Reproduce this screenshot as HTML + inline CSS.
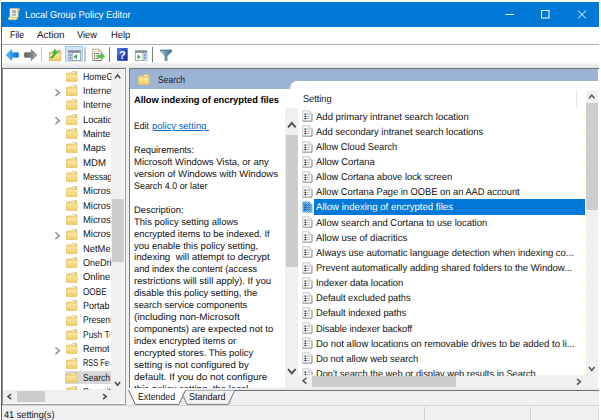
<!DOCTYPE html><html><head><meta charset="utf-8"><title>Local Group Policy Editor</title><style>

html,body{margin:0;padding:0;}
body{width:601px;height:420px;position:relative;overflow:hidden;background:#fff;font-family:"Liberation Sans", sans-serif;}
#w div,#w span,#w svg{position:absolute;}
#w{position:absolute;left:0;top:0;width:601px;height:420px;overflow:hidden;}
.t{text-rendering:geometricPrecision;white-space:pre;line-height:12px;height:12px;display:block;transform-origin:0 0;}

</style></head><body><div id="w">
<div style="left:1px;top:2px;width:598px;height:24.7px;background:#0078d7;"></div>
<div style="left:1px;top:26px;width:1px;height:394px;background:#0078d7;"></div>
<div style="left:2px;top:26.7px;width:597px;height:17.3px;background:#fff;"></div>
<div style="left:2px;top:44px;width:597px;height:0.9px;background:#adadad;"></div>
<div style="left:2px;top:45px;width:597px;height:18px;background:#fff;"></div>
<div style="left:2px;top:63px;width:597px;height:357px;background:#f0f0f0;"></div>
<svg style="left:500px;top:4px" width="96" height="20" viewBox="0 0 96 20"><g stroke="#fff" stroke-width="1" fill="none"><path d="M5.5 10.5h8.5"/><rect x="41.5" y="6.5" width="7.5" height="7.5"/><path d="M78 6.5l8 8M86 6.5l-8 8"/></g></svg>
<svg style="left:6px;top:6px" width="16" height="16" viewBox="6 6 16 16">
<path d="M10.2 8.4h8v9.2h-8z" fill="#fbf4d2"/>
<path d="M10.2 8.4v9.2" stroke="#fffdf0" stroke-width=".8"/>
<path d="M10.4 8.4h7.4" stroke="#e6cf8c" stroke-width=".6"/>
<path d="M17.6 8.5c1.6-.5 2.6.3 2.4 1.5-.1.9-1 1.2-2.2 1z" fill="#dcb862" stroke="#c9a24c" stroke-width=".4"/>
<path d="M18.1 11v6.3" stroke="#e2c77e" stroke-width=".7"/>
<rect x="8.2" y="17.2" width="9" height="2.6" rx="1.3" fill="#fbf1c4" stroke="#d9b663" stroke-width=".6"/>
<path d="M16.3 17.4c1 .1 1.4.6 1.4 1.2s-.5 1.1-1.4 1.1z" fill="#dcb862"/>
<rect x="12" y="10.1" width="4.1" height="2.9" fill="#aaa8b8"/>
<rect x="12" y="13.7" width="4.1" height="2" fill="#aaa8b8"/>
<path d="M12 11.5h4.1M12 14.7h4.1" stroke="#c9c7d2" stroke-width=".5"/>
</svg>
<div style="left:65px;top:45.6px;width:18px;height:17px;background:#cfe5f9;box-sizing:border-box;border:1px solid #a3ccf1;"></div>
<div style="left:41.2px;top:47.2px;width:1.3px;height:14.4px;background:#c6c6c6;"></div>
<div style="left:84.4px;top:47.2px;width:1.3px;height:14.4px;background:#c6c6c6;"></div>
<div style="left:109px;top:47.2px;width:1px;height:14.4px;background:#7a7a7a;"></div>
<div style="left:152px;top:47.2px;width:1px;height:14.4px;background:#7a7a7a;"></div>
<svg style="left:0;top:44px" width="180" height="20" viewBox="0 44 180 20">
<defs>
<linearGradient id="gb" x1="0" y1="0" x2="1" y2="0"><stop offset="0" stop-color="#62bffa"/><stop offset=".45" stop-color="#2e9cef"/><stop offset="1" stop-color="#0a6bd0"/></linearGradient>
<linearGradient id="gg" x1="0" y1="0" x2="1" y2="0"><stop offset="0" stop-color="#626262"/><stop offset=".55" stop-color="#7e7e7e"/><stop offset="1" stop-color="#b0b0b0"/></linearGradient>
<linearGradient id="gfo" x1="0" y1="0" x2="0" y2="1"><stop offset="0" stop-color="#fdeeb0"/><stop offset="1" stop-color="#efcb66"/></linearGradient>
<linearGradient id="gh" x1="0" y1="0" x2="1" y2="1"><stop offset="0" stop-color="#5c80ea"/><stop offset=".5" stop-color="#2f4cc6"/><stop offset="1" stop-color="#152594"/></linearGradient>
<linearGradient id="gf" x1="0" y1="0" x2="1" y2="0"><stop offset="0" stop-color="#b1cadc"/><stop offset=".45" stop-color="#6f96b5"/><stop offset="1" stop-color="#416b8b"/></linearGradient>
</defs>
<path d="M6 55L11.8 49.3V52.5H17.6Q18.7 52.5 18.7 53.6V56.3Q18.7 57.4 17.6 57.4H11.8V60.7Z" fill="url(#gb)" stroke="#3f9fea" stroke-width=".5" stroke-linejoin="round"/>
<path d="M37 55L31.2 49.4V52.5H25.4Q24.3 52.5 24.3 53.6V56.3Q24.3 57.4 25.4 57.4H31.2V60.6Z" fill="url(#gg)" stroke="#6a6a6a" stroke-width=".5" stroke-linejoin="round"/>
<path d="M49.5 52.2h6.2l1-1.7h4.1v10.2H49.5z" fill="#f1d174" stroke="#cfa94a" stroke-width=".6"/>
<rect x="49.5" y="53.2" width="11.3" height="7.5" fill="url(#gfo)" stroke="#d3ae52" stroke-width=".5"/>
<rect x="58" y="51" width="1.5" height="1" fill="#4a8fe0"/>
<path d="M52 53L55 49 57.7 53.5 56 53C55.4 55.5 54 57.3 51.5 58.4L50.5 57C52.6 56 53.6 54.6 53.9 52.7Z" fill="#3cc33c" stroke="#27a027" stroke-width=".4"/>
<rect x="68.3" y="50.7" width="12.4" height="9.8" fill="#fff" stroke="#7f868f" stroke-width=".7"/>
<rect x="68.3" y="50.7" width="12.4" height="2.2" fill="#8a9099"/>
<rect x="68.7" y="53.1" width="3.9" height="7.1" fill="#ccd5e4"/>
<path d="M72.9 53v7.4" stroke="#8a9099" stroke-width=".6"/>
<rect x="69.7" y="54.4" width="1.6" height="1.3" fill="#2f6fd0"/><rect x="69.7" y="57.2" width="1.6" height="1.3" fill="#2f6fd0"/>
<path d="M77 54.1v5.4l-3.5-2.7z" fill="#3cb44a"/>
<path d="M92.3 49.1h6.8l2.7 2.7v8.7H92.3z" fill="#f8f1d8" stroke="#98988e" stroke-width=".7"/>
<path d="M92.3 60.5h9.5" stroke="#6e6e68" stroke-width=".7"/>
<path d="M99.1 49.1v2.7h2.7" fill="#e6dfc4" stroke="#98988e" stroke-width=".5"/>
<path d="M94 53.5h1M94 56h1M94 58.5h1" stroke="#2e2e2e" stroke-width="1"/>
<path d="M95.7 53.5h3.4M95.7 56h2.4M95.7 58.5h2.4" stroke="#6d6fa8" stroke-width=".9"/>
<path d="M98 54.9h3.3V53.1l3.6 3.2-3.6 3.2V57.7H98z" fill="#4ccb3f" stroke="#2f9e2a" stroke-width=".4"/>
<rect x="117" y="48" width="10.7" height="12.8" fill="url(#gh)"/>
<text x="122.4" y="58.7" font-family="Liberation Sans, sans-serif" font-weight="bold" font-size="11" fill="#fff" text-anchor="middle">?</text>
<rect x="135.3" y="50.7" width="11.6" height="9.8" fill="#fff" stroke="#7f868f" stroke-width=".7"/>
<rect x="135.3" y="50.7" width="11.6" height="2.2" fill="#8a9099"/>
<rect x="143.1" y="53.1" width="3.5" height="7.1" fill="#ccd5e4"/>
<path d="M142.9 53v7.4" stroke="#8a9099" stroke-width=".6"/>
<rect x="144.1" y="54.4" width="1.5" height="1.3" fill="#2f6fd0"/><rect x="144.1" y="57.2" width="1.5" height="1.3" fill="#2f6fd0"/>
<path d="M137.5 54.2v5.4l3.4-2.7z" fill="#3cb44a"/>
<path d="M160 49.8h12v1.7l-4.5 4.4v5.2h-3v-5.2L160 51.5z" fill="url(#gf)"/>
<rect x="160" y="49.8" width="12" height="1.1" fill="#54798f"/>
</svg>
<div style="left:2px;top:62px;width:597px;height:6px;background:linear-gradient(#fcfcfc,#efefef 40%,#e4e4e4);"></div>
<div style="left:2px;top:68px;width:124px;height:337px;background:#fff;box-sizing:border-box;border:1px solid #949ca4;border-top-color:#6c747c;border-left-color:#868e96;"></div>
<div style="left:3px;top:69px;width:108.2px;height:321.3px;overflow:hidden">
<svg style="left:62.8px;top:1.8px" width="12" height="11" viewBox="0 0 12 11"><path d="M.6 2.6q0-.6.6-.6h4.2l1-1.4h4q.5 0 .5.5v9.2H.6z" fill="#f3d47a" stroke="#dfbd62" stroke-width=".6"/><rect x=".6" y="3.2" width="10.3" height="7.1" fill="url(#gfo)" stroke="#e3c268" stroke-width=".5"/><path d="M6.9 1.1h3.6v1H6.2z" fill="#fff" opacity=".9"/><rect x="8.8" y="1.1" width="1.5" height=".9" fill="#74abe9"/></svg>
<svg style="left:62.8px;top:16.14px" width="12" height="11" viewBox="0 0 12 11"><path d="M.6 2.6q0-.6.6-.6h4.2l1-1.4h4q.5 0 .5.5v9.2H.6z" fill="#f3d47a" stroke="#dfbd62" stroke-width=".6"/><rect x=".6" y="3.2" width="10.3" height="7.1" fill="url(#gfo)" stroke="#e3c268" stroke-width=".5"/><path d="M6.9 1.1h3.6v1H6.2z" fill="#fff" opacity=".9"/><rect x="8.8" y="1.1" width="1.5" height=".9" fill="#74abe9"/></svg>
<svg style="left:51.00px;top:18.69px" width="7" height="9.3" viewBox="0 0 7 9.3"><path d="M1.4 1.2L5.4 4.65 1.4 8.1" fill="none" stroke="#909090" stroke-width="1.4"/></svg>
<svg style="left:62.8px;top:30.48px" width="12" height="11" viewBox="0 0 12 11"><path d="M.6 2.6q0-.6.6-.6h4.2l1-1.4h4q.5 0 .5.5v9.2H.6z" fill="#f3d47a" stroke="#dfbd62" stroke-width=".6"/><rect x=".6" y="3.2" width="10.3" height="7.1" fill="url(#gfo)" stroke="#e3c268" stroke-width=".5"/><path d="M6.9 1.1h3.6v1H6.2z" fill="#fff" opacity=".9"/><rect x="8.8" y="1.1" width="1.5" height=".9" fill="#74abe9"/></svg>
<svg style="left:62.8px;top:44.81px" width="12" height="11" viewBox="0 0 12 11"><path d="M.6 2.6q0-.6.6-.6h4.2l1-1.4h4q.5 0 .5.5v9.2H.6z" fill="#f3d47a" stroke="#dfbd62" stroke-width=".6"/><rect x=".6" y="3.2" width="10.3" height="7.1" fill="url(#gfo)" stroke="#e3c268" stroke-width=".5"/><path d="M6.9 1.1h3.6v1H6.2z" fill="#fff" opacity=".9"/><rect x="8.8" y="1.1" width="1.5" height=".9" fill="#74abe9"/></svg>
<svg style="left:51.00px;top:47.36px" width="7" height="9.3" viewBox="0 0 7 9.3"><path d="M1.4 1.2L5.4 4.65 1.4 8.1" fill="none" stroke="#909090" stroke-width="1.4"/></svg>
<svg style="left:62.8px;top:59.15px" width="12" height="11" viewBox="0 0 12 11"><path d="M.6 2.6q0-.6.6-.6h4.2l1-1.4h4q.5 0 .5.5v9.2H.6z" fill="#f3d47a" stroke="#dfbd62" stroke-width=".6"/><rect x=".6" y="3.2" width="10.3" height="7.1" fill="url(#gfo)" stroke="#e3c268" stroke-width=".5"/><path d="M6.9 1.1h3.6v1H6.2z" fill="#fff" opacity=".9"/><rect x="8.8" y="1.1" width="1.5" height=".9" fill="#74abe9"/></svg>
<svg style="left:62.8px;top:73.49px" width="12" height="11" viewBox="0 0 12 11"><path d="M.6 2.6q0-.6.6-.6h4.2l1-1.4h4q.5 0 .5.5v9.2H.6z" fill="#f3d47a" stroke="#dfbd62" stroke-width=".6"/><rect x=".6" y="3.2" width="10.3" height="7.1" fill="url(#gfo)" stroke="#e3c268" stroke-width=".5"/><path d="M6.9 1.1h3.6v1H6.2z" fill="#fff" opacity=".9"/><rect x="8.8" y="1.1" width="1.5" height=".9" fill="#74abe9"/></svg>
<svg style="left:62.8px;top:87.83px" width="12" height="11" viewBox="0 0 12 11"><path d="M.6 2.6q0-.6.6-.6h4.2l1-1.4h4q.5 0 .5.5v9.2H.6z" fill="#f3d47a" stroke="#dfbd62" stroke-width=".6"/><rect x=".6" y="3.2" width="10.3" height="7.1" fill="url(#gfo)" stroke="#e3c268" stroke-width=".5"/><path d="M6.9 1.1h3.6v1H6.2z" fill="#fff" opacity=".9"/><rect x="8.8" y="1.1" width="1.5" height=".9" fill="#74abe9"/></svg>
<svg style="left:62.8px;top:102.17px" width="12" height="11" viewBox="0 0 12 11"><path d="M.6 2.6q0-.6.6-.6h4.2l1-1.4h4q.5 0 .5.5v9.2H.6z" fill="#f3d47a" stroke="#dfbd62" stroke-width=".6"/><rect x=".6" y="3.2" width="10.3" height="7.1" fill="url(#gfo)" stroke="#e3c268" stroke-width=".5"/><path d="M6.9 1.1h3.6v1H6.2z" fill="#fff" opacity=".9"/><rect x="8.8" y="1.1" width="1.5" height=".9" fill="#74abe9"/></svg>
<svg style="left:62.8px;top:116.5px" width="12" height="11" viewBox="0 0 12 11"><path d="M.6 2.6q0-.6.6-.6h4.2l1-1.4h4q.5 0 .5.5v9.2H.6z" fill="#f3d47a" stroke="#dfbd62" stroke-width=".6"/><rect x=".6" y="3.2" width="10.3" height="7.1" fill="url(#gfo)" stroke="#e3c268" stroke-width=".5"/><path d="M6.9 1.1h3.6v1H6.2z" fill="#fff" opacity=".9"/><rect x="8.8" y="1.1" width="1.5" height=".9" fill="#74abe9"/></svg>
<svg style="left:62.8px;top:130.84px" width="12" height="11" viewBox="0 0 12 11"><path d="M.6 2.6q0-.6.6-.6h4.2l1-1.4h4q.5 0 .5.5v9.2H.6z" fill="#f3d47a" stroke="#dfbd62" stroke-width=".6"/><rect x=".6" y="3.2" width="10.3" height="7.1" fill="url(#gfo)" stroke="#e3c268" stroke-width=".5"/><path d="M6.9 1.1h3.6v1H6.2z" fill="#fff" opacity=".9"/><rect x="8.8" y="1.1" width="1.5" height=".9" fill="#74abe9"/></svg>
<svg style="left:62.8px;top:145.18px" width="12" height="11" viewBox="0 0 12 11"><path d="M.6 2.6q0-.6.6-.6h4.2l1-1.4h4q.5 0 .5.5v9.2H.6z" fill="#f3d47a" stroke="#dfbd62" stroke-width=".6"/><rect x=".6" y="3.2" width="10.3" height="7.1" fill="url(#gfo)" stroke="#e3c268" stroke-width=".5"/><path d="M6.9 1.1h3.6v1H6.2z" fill="#fff" opacity=".9"/><rect x="8.8" y="1.1" width="1.5" height=".9" fill="#74abe9"/></svg>
<svg style="left:62.8px;top:159.52px" width="12" height="11" viewBox="0 0 12 11"><path d="M.6 2.6q0-.6.6-.6h4.2l1-1.4h4q.5 0 .5.5v9.2H.6z" fill="#f3d47a" stroke="#dfbd62" stroke-width=".6"/><rect x=".6" y="3.2" width="10.3" height="7.1" fill="url(#gfo)" stroke="#e3c268" stroke-width=".5"/><path d="M6.9 1.1h3.6v1H6.2z" fill="#fff" opacity=".9"/><rect x="8.8" y="1.1" width="1.5" height=".9" fill="#74abe9"/></svg>
<svg style="left:51.00px;top:162.07px" width="7" height="9.3" viewBox="0 0 7 9.3"><path d="M1.4 1.2L5.4 4.65 1.4 8.1" fill="none" stroke="#909090" stroke-width="1.4"/></svg>
<svg style="left:62.8px;top:173.86px" width="12" height="11" viewBox="0 0 12 11"><path d="M.6 2.6q0-.6.6-.6h4.2l1-1.4h4q.5 0 .5.5v9.2H.6z" fill="#f3d47a" stroke="#dfbd62" stroke-width=".6"/><rect x=".6" y="3.2" width="10.3" height="7.1" fill="url(#gfo)" stroke="#e3c268" stroke-width=".5"/><path d="M6.9 1.1h3.6v1H6.2z" fill="#fff" opacity=".9"/><rect x="8.8" y="1.1" width="1.5" height=".9" fill="#74abe9"/></svg>
<svg style="left:62.8px;top:188.19px" width="12" height="11" viewBox="0 0 12 11"><path d="M.6 2.6q0-.6.6-.6h4.2l1-1.4h4q.5 0 .5.5v9.2H.6z" fill="#f3d47a" stroke="#dfbd62" stroke-width=".6"/><rect x=".6" y="3.2" width="10.3" height="7.1" fill="url(#gfo)" stroke="#e3c268" stroke-width=".5"/><path d="M6.9 1.1h3.6v1H6.2z" fill="#fff" opacity=".9"/><rect x="8.8" y="1.1" width="1.5" height=".9" fill="#74abe9"/></svg>
<svg style="left:62.8px;top:202.53px" width="12" height="11" viewBox="0 0 12 11"><path d="M.6 2.6q0-.6.6-.6h4.2l1-1.4h4q.5 0 .5.5v9.2H.6z" fill="#f3d47a" stroke="#dfbd62" stroke-width=".6"/><rect x=".6" y="3.2" width="10.3" height="7.1" fill="url(#gfo)" stroke="#e3c268" stroke-width=".5"/><path d="M6.9 1.1h3.6v1H6.2z" fill="#fff" opacity=".9"/><rect x="8.8" y="1.1" width="1.5" height=".9" fill="#74abe9"/></svg>
<svg style="left:62.8px;top:216.87px" width="12" height="11" viewBox="0 0 12 11"><path d="M.6 2.6q0-.6.6-.6h4.2l1-1.4h4q.5 0 .5.5v9.2H.6z" fill="#f3d47a" stroke="#dfbd62" stroke-width=".6"/><rect x=".6" y="3.2" width="10.3" height="7.1" fill="url(#gfo)" stroke="#e3c268" stroke-width=".5"/><path d="M6.9 1.1h3.6v1H6.2z" fill="#fff" opacity=".9"/><rect x="8.8" y="1.1" width="1.5" height=".9" fill="#74abe9"/></svg>
<svg style="left:62.8px;top:231.21px" width="12" height="11" viewBox="0 0 12 11"><path d="M.6 2.6q0-.6.6-.6h4.2l1-1.4h4q.5 0 .5.5v9.2H.6z" fill="#f3d47a" stroke="#dfbd62" stroke-width=".6"/><rect x=".6" y="3.2" width="10.3" height="7.1" fill="url(#gfo)" stroke="#e3c268" stroke-width=".5"/><path d="M6.9 1.1h3.6v1H6.2z" fill="#fff" opacity=".9"/><rect x="8.8" y="1.1" width="1.5" height=".9" fill="#74abe9"/></svg>
<svg style="left:62.8px;top:245.55px" width="12" height="11" viewBox="0 0 12 11"><path d="M.6 2.6q0-.6.6-.6h4.2l1-1.4h4q.5 0 .5.5v9.2H.6z" fill="#f3d47a" stroke="#dfbd62" stroke-width=".6"/><rect x=".6" y="3.2" width="10.3" height="7.1" fill="url(#gfo)" stroke="#e3c268" stroke-width=".5"/><path d="M6.9 1.1h3.6v1H6.2z" fill="#fff" opacity=".9"/><rect x="8.8" y="1.1" width="1.5" height=".9" fill="#74abe9"/></svg>
<svg style="left:62.8px;top:259.88px" width="12" height="11" viewBox="0 0 12 11"><path d="M.6 2.6q0-.6.6-.6h4.2l1-1.4h4q.5 0 .5.5v9.2H.6z" fill="#f3d47a" stroke="#dfbd62" stroke-width=".6"/><rect x=".6" y="3.2" width="10.3" height="7.1" fill="url(#gfo)" stroke="#e3c268" stroke-width=".5"/><path d="M6.9 1.1h3.6v1H6.2z" fill="#fff" opacity=".9"/><rect x="8.8" y="1.1" width="1.5" height=".9" fill="#74abe9"/></svg>
<svg style="left:62.8px;top:274.22px" width="12" height="11" viewBox="0 0 12 11"><path d="M.6 2.6q0-.6.6-.6h4.2l1-1.4h4q.5 0 .5.5v9.2H.6z" fill="#f3d47a" stroke="#dfbd62" stroke-width=".6"/><rect x=".6" y="3.2" width="10.3" height="7.1" fill="url(#gfo)" stroke="#e3c268" stroke-width=".5"/><path d="M6.9 1.1h3.6v1H6.2z" fill="#fff" opacity=".9"/><rect x="8.8" y="1.1" width="1.5" height=".9" fill="#74abe9"/></svg>
<svg style="left:51.00px;top:276.77px" width="7" height="9.3" viewBox="0 0 7 9.3"><path d="M1.4 1.2L5.4 4.65 1.4 8.1" fill="none" stroke="#909090" stroke-width="1.4"/></svg>
<svg style="left:62.8px;top:288.56px" width="12" height="11" viewBox="0 0 12 11"><path d="M.6 2.6q0-.6.6-.6h4.2l1-1.4h4q.5 0 .5.5v9.2H.6z" fill="#f3d47a" stroke="#dfbd62" stroke-width=".6"/><rect x=".6" y="3.2" width="10.3" height="7.1" fill="url(#gfo)" stroke="#e3c268" stroke-width=".5"/><path d="M6.9 1.1h3.6v1H6.2z" fill="#fff" opacity=".9"/><rect x="8.8" y="1.1" width="1.5" height=".9" fill="#74abe9"/></svg>
<div style="left:62px;top:301.79799999999994px;width:60px;height:13.4px;background:#d9d9d9;"></div>
<svg style="left:62.8px;top:302.9px" width="12" height="11" viewBox="0 0 12 11"><path d="M.6 2.6q0-.6.6-.6h4.2l1-1.4h4q.5 0 .5.5v9.2H.6z" fill="#f3d47a" stroke="#dfbd62" stroke-width=".6"/><rect x=".6" y="3.2" width="10.3" height="7.1" fill="url(#gfo)" stroke="#e3c268" stroke-width=".5"/><path d="M6.9 1.1h3.6v1H6.2z" fill="#fff" opacity=".9"/><rect x="8.8" y="1.1" width="1.5" height=".9" fill="#74abe9"/></svg>
<svg style="left:62.8px;top:317.24px" width="12" height="11" viewBox="0 0 12 11"><path d="M.6 2.6q0-.6.6-.6h4.2l1-1.4h4q.5 0 .5.5v9.2H.6z" fill="#f3d47a" stroke="#dfbd62" stroke-width=".6"/><rect x=".6" y="3.2" width="10.3" height="7.1" fill="url(#gfo)" stroke="#e3c268" stroke-width=".5"/><path d="M6.9 1.1h3.6v1H6.2z" fill="#fff" opacity=".9"/><rect x="8.8" y="1.1" width="1.5" height=".9" fill="#74abe9"/></svg>
</div>
<div style="left:111.3px;top:69px;width:12.8px;height:335px;background:#f0f0f0;"></div>
<div style="left:111.7px;top:199.3px;width:12.6px;height:63px;background:#cdcdcd;"></div>
<div style="left:3px;top:390.3px;width:121.8px;height:12.8px;background:#f0f0f0;"></div>
<div style="left:3px;top:403.1px;width:121.8px;height:0.9px;background:#fbfbfb;"></div>
<div style="left:17.1px;top:390.8px;width:27.6px;height:11.6px;background:#cdcdcd;"></div>
<svg style="left:113.20px;top:73.00px" width="9.2" height="7.2" viewBox="0 0 9.2 7.2"><path d="M2 5.2L4.6 2 7.2 5.2" fill="none" stroke="#4a4a4a" stroke-width="1.5"/></svg>
<svg style="left:113.20px;top:379.70px" width="9.2" height="7.2" viewBox="0 0 9.2 7.2"><path d="M2 2L4.6 5.2 7.2 2" fill="none" stroke="#4a4a4a" stroke-width="1.5"/></svg>
<svg style="left:6.20px;top:392.00px" width="7.2" height="9.2" viewBox="0 0 7.2 9.2"><path d="M5.2 2L2 4.6 5.2 7.2" fill="none" stroke="#4a4a4a" stroke-width="1.5"/></svg>
<svg style="left:100.90px;top:391.90px" width="7.2" height="9.2" viewBox="0 0 7.2 9.2"><path d="M2 2L5.2 4.6 2 7.2" fill="none" stroke="#4a4a4a" stroke-width="1.5"/></svg>
<div style="left:128.7px;top:68px;width:470.3px;height:323px;background:#fff;box-sizing:border-box;border:1px solid #707880;border-top-color:#6c747c;border-right:0;border-bottom:0;"></div>
<div style="left:129.7px;top:69px;width:468.8px;height:19.7px;background:#9bb4d3;"></div>
<div style="left:290.3px;top:81.4px;width:307.9px;height:10px;background:#fff;border-top-left-radius:7px 8px;"></div>
<svg style="left:138px;top:74.3px" width="12" height="11" viewBox="0 0 12 11"><path d="M.6 2.6q0-.6.6-.6h4.2l1-1.4h4q.5 0 .5.5v9.2H.6z" fill="#f3d47a" stroke="#dfbd62" stroke-width=".6"/><rect x=".6" y="3.2" width="10.3" height="7.1" fill="url(#gfo)" stroke="#e3c268" stroke-width=".5"/><path d="M6.9 1.1h3.6v1H6.2z" fill="#fff" opacity=".9"/><rect x="8.8" y="1.1" width="1.5" height=".9" fill="#74abe9"/></svg>
<div style="left:285.3px;top:108.3px;width:13.2px;height:279.7px;background:#f0f0f0;"></div>
<div style="left:286px;top:135px;width:11.8px;height:131.7px;background:#cdcdcd;"></div>
<svg style="left:286.00px;top:120.80px" width="11.6" height="8.4" viewBox="0 0 11.6 8.4"><path d="M2 6.4L5.8 2 9.6 6.4" fill="none" stroke="#4a4a4a" stroke-width="1.9"/></svg>
<svg style="left:286.00px;top:366.80px" width="11.6" height="8.4" viewBox="0 0 11.6 8.4"><path d="M2 2L5.8 6.4 9.6 2" fill="none" stroke="#4a4a4a" stroke-width="1.9"/></svg>
<div style="left:576px;top:89.5px;width:1px;height:18px;background:#e5e5e5;"></div>
<div style="left:299px;top:106px;width:286px;height:269px;overflow:hidden">
<svg style="left:3.2px;top:4.3px" width="11" height="12" viewBox="0 0 11 12"><path d="M.8.8h6.2l2.9 2.9v7.4H.8z" fill="#fff" stroke="#b9b9b9" stroke-width=".8"/><path d="M.6 11.2h9.4V3.9" fill="none" stroke="#8a8a8a" stroke-width=".8"/><path d="M7 .8v2.9h2.9" fill="none" stroke="#b0b0b0" stroke-width=".6"/><path d="M2.5 4.1h1.7M2.5 6.3h1.7M2.5 8.5h1.7" stroke="#1c1c1c" stroke-width="1.3"/><path d="M4.9 4.1h3.2M4.9 6.3h3.2M4.9 8.5h3.2" stroke="#a6aab8" stroke-width=".8"/></svg>
<div style="left:285.1px;top:6.600000000000003px;width:0.9px;height:6.6px;background:#ffffcf;"></div>
<svg style="left:3.2px;top:19.43px" width="11" height="12" viewBox="0 0 11 12"><path d="M.8.8h6.2l2.9 2.9v7.4H.8z" fill="#fff" stroke="#b9b9b9" stroke-width=".8"/><path d="M.6 11.2h9.4V3.9" fill="none" stroke="#8a8a8a" stroke-width=".8"/><path d="M7 .8v2.9h2.9" fill="none" stroke="#b0b0b0" stroke-width=".6"/><path d="M2.5 4.1h1.7M2.5 6.3h1.7M2.5 8.5h1.7" stroke="#1c1c1c" stroke-width="1.3"/><path d="M4.9 4.1h3.2M4.9 6.3h3.2M4.9 8.5h3.2" stroke="#a6aab8" stroke-width=".8"/></svg>
<div style="left:285.1px;top:21.73000000000001px;width:0.9px;height:6.6px;background:#ffffcf;"></div>
<svg style="left:3.2px;top:34.56px" width="11" height="12" viewBox="0 0 11 12"><path d="M.8.8h6.2l2.9 2.9v7.4H.8z" fill="#fff" stroke="#b9b9b9" stroke-width=".8"/><path d="M.6 11.2h9.4V3.9" fill="none" stroke="#8a8a8a" stroke-width=".8"/><path d="M7 .8v2.9h2.9" fill="none" stroke="#b0b0b0" stroke-width=".6"/><path d="M2.5 4.1h1.7M2.5 6.3h1.7M2.5 8.5h1.7" stroke="#1c1c1c" stroke-width="1.3"/><path d="M4.9 4.1h3.2M4.9 6.3h3.2M4.9 8.5h3.2" stroke="#a6aab8" stroke-width=".8"/></svg>
<div style="left:285.1px;top:36.86000000000001px;width:0.9px;height:6.6px;background:#ffffcf;"></div>
<svg style="left:3.2px;top:49.69px" width="11" height="12" viewBox="0 0 11 12"><path d="M.8.8h6.2l2.9 2.9v7.4H.8z" fill="#fff" stroke="#b9b9b9" stroke-width=".8"/><path d="M.6 11.2h9.4V3.9" fill="none" stroke="#8a8a8a" stroke-width=".8"/><path d="M7 .8v2.9h2.9" fill="none" stroke="#b0b0b0" stroke-width=".6"/><path d="M2.5 4.1h1.7M2.5 6.3h1.7M2.5 8.5h1.7" stroke="#1c1c1c" stroke-width="1.3"/><path d="M4.9 4.1h3.2M4.9 6.3h3.2M4.9 8.5h3.2" stroke="#a6aab8" stroke-width=".8"/></svg>
<div style="left:285.1px;top:51.99px;width:0.9px;height:6.6px;background:#ffffcf;"></div>
<svg style="left:3.2px;top:64.82px" width="11" height="12" viewBox="0 0 11 12"><path d="M.8.8h6.2l2.9 2.9v7.4H.8z" fill="#fff" stroke="#b9b9b9" stroke-width=".8"/><path d="M.6 11.2h9.4V3.9" fill="none" stroke="#8a8a8a" stroke-width=".8"/><path d="M7 .8v2.9h2.9" fill="none" stroke="#b0b0b0" stroke-width=".6"/><path d="M2.5 4.1h1.7M2.5 6.3h1.7M2.5 8.5h1.7" stroke="#1c1c1c" stroke-width="1.3"/><path d="M4.9 4.1h3.2M4.9 6.3h3.2M4.9 8.5h3.2" stroke="#a6aab8" stroke-width=".8"/></svg>
<div style="left:285.1px;top:67.12px;width:0.9px;height:6.6px;background:#ffffcf;"></div>
<svg style="left:3.2px;top:79.95px" width="11" height="12" viewBox="0 0 11 12"><path d="M.8.8h6.2l2.9 2.9v7.4H.8z" fill="#fff" stroke="#b9b9b9" stroke-width=".8"/><path d="M.6 11.2h9.4V3.9" fill="none" stroke="#8a8a8a" stroke-width=".8"/><path d="M7 .8v2.9h2.9" fill="none" stroke="#b0b0b0" stroke-width=".6"/><path d="M2.5 4.1h1.7M2.5 6.3h1.7M2.5 8.5h1.7" stroke="#1c1c1c" stroke-width="1.3"/><path d="M4.9 4.1h3.2M4.9 6.3h3.2M4.9 8.5h3.2" stroke="#a6aab8" stroke-width=".8"/></svg>
<div style="left:285.1px;top:82.25000000000003px;width:0.9px;height:6.6px;background:#ffffcf;"></div>
<div style="left:15.4px;top:93.38000000000002px;width:271.4px;height:15.2px;background:#0078d7;"></div>
<svg style="left:3.3px;top:94.98px" width="11" height="12" viewBox="0 0 11 12"><defs><pattern id="ck" width="2" height="2" patternUnits="userSpaceOnUse"><rect width="2" height="2" fill="#4a97e0"/><rect width="1" height="1" fill="#7db5ea"/><rect x="1" y="1" width="1" height="1" fill="#7db5ea"/></pattern></defs><path d="M.4.4h6.8l3.2 3.2v8H.4z" fill="url(#ck)"/><path d="M2.5 4.1h1.7M2.5 6.3h1.7M2.5 8.5h1.7" stroke="#0c3f86" stroke-width="1.3"/><path d="M4.9 4.1h3.2M4.9 6.3h3.2M4.9 8.5h3.2" stroke="#1f6fc4" stroke-width=".8"/></svg>
<svg style="left:3.2px;top:110.21px" width="11" height="12" viewBox="0 0 11 12"><path d="M.8.8h6.2l2.9 2.9v7.4H.8z" fill="#fff" stroke="#b9b9b9" stroke-width=".8"/><path d="M.6 11.2h9.4V3.9" fill="none" stroke="#8a8a8a" stroke-width=".8"/><path d="M7 .8v2.9h2.9" fill="none" stroke="#b0b0b0" stroke-width=".6"/><path d="M2.5 4.1h1.7M2.5 6.3h1.7M2.5 8.5h1.7" stroke="#1c1c1c" stroke-width="1.3"/><path d="M4.9 4.1h3.2M4.9 6.3h3.2M4.9 8.5h3.2" stroke="#a6aab8" stroke-width=".8"/></svg>
<div style="left:285.1px;top:112.51000000000002px;width:0.9px;height:6.6px;background:#ffffcf;"></div>
<svg style="left:3.2px;top:125.34px" width="11" height="12" viewBox="0 0 11 12"><path d="M.8.8h6.2l2.9 2.9v7.4H.8z" fill="#fff" stroke="#b9b9b9" stroke-width=".8"/><path d="M.6 11.2h9.4V3.9" fill="none" stroke="#8a8a8a" stroke-width=".8"/><path d="M7 .8v2.9h2.9" fill="none" stroke="#b0b0b0" stroke-width=".6"/><path d="M2.5 4.1h1.7M2.5 6.3h1.7M2.5 8.5h1.7" stroke="#1c1c1c" stroke-width="1.3"/><path d="M4.9 4.1h3.2M4.9 6.3h3.2M4.9 8.5h3.2" stroke="#a6aab8" stroke-width=".8"/></svg>
<div style="left:285.1px;top:127.64000000000001px;width:0.9px;height:6.6px;background:#ffffcf;"></div>
<svg style="left:3.2px;top:140.47px" width="11" height="12" viewBox="0 0 11 12"><path d="M.8.8h6.2l2.9 2.9v7.4H.8z" fill="#fff" stroke="#b9b9b9" stroke-width=".8"/><path d="M.6 11.2h9.4V3.9" fill="none" stroke="#8a8a8a" stroke-width=".8"/><path d="M7 .8v2.9h2.9" fill="none" stroke="#b0b0b0" stroke-width=".6"/><path d="M2.5 4.1h1.7M2.5 6.3h1.7M2.5 8.5h1.7" stroke="#1c1c1c" stroke-width="1.3"/><path d="M4.9 4.1h3.2M4.9 6.3h3.2M4.9 8.5h3.2" stroke="#a6aab8" stroke-width=".8"/></svg>
<div style="left:285.1px;top:142.77px;width:0.9px;height:6.6px;background:#ffffcf;"></div>
<svg style="left:3.2px;top:155.6px" width="11" height="12" viewBox="0 0 11 12"><path d="M.8.8h6.2l2.9 2.9v7.4H.8z" fill="#fff" stroke="#b9b9b9" stroke-width=".8"/><path d="M.6 11.2h9.4V3.9" fill="none" stroke="#8a8a8a" stroke-width=".8"/><path d="M7 .8v2.9h2.9" fill="none" stroke="#b0b0b0" stroke-width=".6"/><path d="M2.5 4.1h1.7M2.5 6.3h1.7M2.5 8.5h1.7" stroke="#1c1c1c" stroke-width="1.3"/><path d="M4.9 4.1h3.2M4.9 6.3h3.2M4.9 8.5h3.2" stroke="#a6aab8" stroke-width=".8"/></svg>
<div style="left:285.1px;top:157.9px;width:0.9px;height:6.6px;background:#ffffcf;"></div>
<svg style="left:3.2px;top:170.73px" width="11" height="12" viewBox="0 0 11 12"><path d="M.8.8h6.2l2.9 2.9v7.4H.8z" fill="#fff" stroke="#b9b9b9" stroke-width=".8"/><path d="M.6 11.2h9.4V3.9" fill="none" stroke="#8a8a8a" stroke-width=".8"/><path d="M7 .8v2.9h2.9" fill="none" stroke="#b0b0b0" stroke-width=".6"/><path d="M2.5 4.1h1.7M2.5 6.3h1.7M2.5 8.5h1.7" stroke="#1c1c1c" stroke-width="1.3"/><path d="M4.9 4.1h3.2M4.9 6.3h3.2M4.9 8.5h3.2" stroke="#a6aab8" stroke-width=".8"/></svg>
<div style="left:285.1px;top:173.03px;width:0.9px;height:6.6px;background:#ffffcf;"></div>
<svg style="left:3.2px;top:185.86px" width="11" height="12" viewBox="0 0 11 12"><path d="M.8.8h6.2l2.9 2.9v7.4H.8z" fill="#fff" stroke="#b9b9b9" stroke-width=".8"/><path d="M.6 11.2h9.4V3.9" fill="none" stroke="#8a8a8a" stroke-width=".8"/><path d="M7 .8v2.9h2.9" fill="none" stroke="#b0b0b0" stroke-width=".6"/><path d="M2.5 4.1h1.7M2.5 6.3h1.7M2.5 8.5h1.7" stroke="#1c1c1c" stroke-width="1.3"/><path d="M4.9 4.1h3.2M4.9 6.3h3.2M4.9 8.5h3.2" stroke="#a6aab8" stroke-width=".8"/></svg>
<div style="left:285.1px;top:188.16px;width:0.9px;height:6.6px;background:#ffffcf;"></div>
<svg style="left:3.2px;top:200.99px" width="11" height="12" viewBox="0 0 11 12"><path d="M.8.8h6.2l2.9 2.9v7.4H.8z" fill="#fff" stroke="#b9b9b9" stroke-width=".8"/><path d="M.6 11.2h9.4V3.9" fill="none" stroke="#8a8a8a" stroke-width=".8"/><path d="M7 .8v2.9h2.9" fill="none" stroke="#b0b0b0" stroke-width=".6"/><path d="M2.5 4.1h1.7M2.5 6.3h1.7M2.5 8.5h1.7" stroke="#1c1c1c" stroke-width="1.3"/><path d="M4.9 4.1h3.2M4.9 6.3h3.2M4.9 8.5h3.2" stroke="#a6aab8" stroke-width=".8"/></svg>
<div style="left:285.1px;top:203.29px;width:0.9px;height:6.6px;background:#ffffcf;"></div>
<svg style="left:3.2px;top:216.12px" width="11" height="12" viewBox="0 0 11 12"><path d="M.8.8h6.2l2.9 2.9v7.4H.8z" fill="#fff" stroke="#b9b9b9" stroke-width=".8"/><path d="M.6 11.2h9.4V3.9" fill="none" stroke="#8a8a8a" stroke-width=".8"/><path d="M7 .8v2.9h2.9" fill="none" stroke="#b0b0b0" stroke-width=".6"/><path d="M2.5 4.1h1.7M2.5 6.3h1.7M2.5 8.5h1.7" stroke="#1c1c1c" stroke-width="1.3"/><path d="M4.9 4.1h3.2M4.9 6.3h3.2M4.9 8.5h3.2" stroke="#a6aab8" stroke-width=".8"/></svg>
<div style="left:285.1px;top:218.42000000000004px;width:0.9px;height:6.6px;background:#ffffcf;"></div>
<svg style="left:3.2px;top:231.25px" width="11" height="12" viewBox="0 0 11 12"><path d="M.8.8h6.2l2.9 2.9v7.4H.8z" fill="#fff" stroke="#b9b9b9" stroke-width=".8"/><path d="M.6 11.2h9.4V3.9" fill="none" stroke="#8a8a8a" stroke-width=".8"/><path d="M7 .8v2.9h2.9" fill="none" stroke="#b0b0b0" stroke-width=".6"/><path d="M2.5 4.1h1.7M2.5 6.3h1.7M2.5 8.5h1.7" stroke="#1c1c1c" stroke-width="1.3"/><path d="M4.9 4.1h3.2M4.9 6.3h3.2M4.9 8.5h3.2" stroke="#a6aab8" stroke-width=".8"/></svg>
<div style="left:285.1px;top:233.55000000000004px;width:0.9px;height:6.6px;background:#ffffcf;"></div>
<svg style="left:3.2px;top:246.38px" width="11" height="12" viewBox="0 0 11 12"><path d="M.8.8h6.2l2.9 2.9v7.4H.8z" fill="#fff" stroke="#b9b9b9" stroke-width=".8"/><path d="M.6 11.2h9.4V3.9" fill="none" stroke="#8a8a8a" stroke-width=".8"/><path d="M7 .8v2.9h2.9" fill="none" stroke="#b0b0b0" stroke-width=".6"/><path d="M2.5 4.1h1.7M2.5 6.3h1.7M2.5 8.5h1.7" stroke="#1c1c1c" stroke-width="1.3"/><path d="M4.9 4.1h3.2M4.9 6.3h3.2M4.9 8.5h3.2" stroke="#a6aab8" stroke-width=".8"/></svg>
<div style="left:285.1px;top:248.68000000000004px;width:0.9px;height:6.6px;background:#ffffcf;"></div>
<svg style="left:3.2px;top:261.51px" width="11" height="12" viewBox="0 0 11 12"><path d="M.8.8h6.2l2.9 2.9v7.4H.8z" fill="#fff" stroke="#b9b9b9" stroke-width=".8"/><path d="M.6 11.2h9.4V3.9" fill="none" stroke="#8a8a8a" stroke-width=".8"/><path d="M7 .8v2.9h2.9" fill="none" stroke="#b0b0b0" stroke-width=".6"/><path d="M2.5 4.1h1.7M2.5 6.3h1.7M2.5 8.5h1.7" stroke="#1c1c1c" stroke-width="1.3"/><path d="M4.9 4.1h3.2M4.9 6.3h3.2M4.9 8.5h3.2" stroke="#a6aab8" stroke-width=".8"/></svg>
<div style="left:285.1px;top:263.81px;width:0.9px;height:6.6px;background:#ffffcf;"></div>
</div>
<div style="left:585.8px;top:89.5px;width:12.4px;height:285.7px;background:#f0f0f0;"></div>
<div style="left:585.8px;top:103px;width:12.4px;height:106.6px;background:#cdcdcd;"></div>
<div style="left:298.3px;top:375.2px;width:299.9px;height:12.8px;background:#f0f0f0;"></div>
<div style="left:312.3px;top:375.8px;width:143.7px;height:10.9px;background:#cdcdcd;"></div>
<svg style="left:587.20px;top:93.00px" width="9.6" height="7.4" viewBox="0 0 9.6 7.4"><path d="M2 5.4L4.8 2 7.6 5.4" fill="none" stroke="#4a4a4a" stroke-width="1.4"/></svg>
<svg style="left:587.20px;top:364.50px" width="9.6" height="7.4" viewBox="0 0 9.6 7.4"><path d="M2 2L4.8 5.4 7.6 2" fill="none" stroke="#4a4a4a" stroke-width="1.4"/></svg>
<svg style="left:301.30px;top:376.40px" width="7.4" height="9.6" viewBox="0 0 7.4 9.6"><path d="M5.4 2L2 4.8 5.4 7.6" fill="none" stroke="#4a4a4a" stroke-width="1.4"/></svg>
<svg style="left:574.70px;top:376.60px" width="7.4" height="9.6" viewBox="0 0 7.4 9.6"><path d="M2 2L5.4 4.8 2 7.6" fill="none" stroke="#4a4a4a" stroke-width="1.4"/></svg>
<div style="left:185.3px;top:388px;width:413.7px;height:2px;background:#eaeaea;"></div>
<div style="left:185.3px;top:390px;width:413.7px;height:1.1px;background:#707070;"></div>
<svg style="left:126px;top:388px" width="120" height="18" viewBox="0 0 120 18">
<path d="M59.3 2.5L57.3 8.5 61 16.4H102.3L108.7 2.5z" fill="#f3f3f3"/>
<path d="M57.3 8.5L61 16.4H102.3L108.7 2.5" fill="none" stroke="#6a6a6a" stroke-width=".9"/>
<path d="M2.6 0V2L9.3 16.4H53L59.3 2.5V0z" fill="#fff"/>
<path d="M2.6 2L9.3 16.4H53L59.3 2.5" fill="none" stroke="#5a5a5a" stroke-width=".9"/>
</svg>
<div style="left:2px;top:405.3px;width:597px;height:1px;background:#d4d4d4;"></div>
<div style="left:423.7px;top:407px;width:1px;height:13px;background:#d0d0d0;"></div>
<div style="left:530px;top:407px;width:1px;height:13px;background:#d0d0d0;"></div>
<div style="left:598px;top:406.2px;width:0.8px;height:14px;background:#dedede;"></div>
<span class="t" style="left:25.3px;top:9.80px;font-size:9.9px;color:#fff;transform:scaleX(0.9469);">Local Group Policy Editor</span>
<span class="t" style="left:10px;top:30.20px;font-size:9.9px;color:#111;transform:scaleX(0.8919);">File</span>
<span class="t" style="left:37px;top:30.20px;font-size:9.9px;color:#111;transform:scaleX(1.0017);">Action</span>
<span class="t" style="left:77.3px;top:30.20px;font-size:9.9px;color:#111;transform:scaleX(0.9419);">View</span>
<span class="t" style="left:110.5px;top:30.20px;font-size:9.9px;color:#111;transform:scaleX(0.9502);">Help</span>
<span class="t" style="left:83px;top:71.70px;font-size:9.9px;color:#111;transform:scaleX(0.8883);width:31.75px;overflow:hidden;">HomeGroup</span>
<span class="t" style="left:83px;top:86.04px;font-size:9.9px;color:#111;transform:scaleX(0.9182);width:30.71px;overflow:hidden;">Internet Explorer</span>
<span class="t" style="left:83px;top:100.38px;font-size:9.9px;color:#111;transform:scaleX(0.9182);width:30.71px;overflow:hidden;">Internet Information Services</span>
<span class="t" style="left:83px;top:114.71px;font-size:9.9px;color:#111;transform:scaleX(0.9333);width:30.22px;overflow:hidden;">Location and Sensors</span>
<span class="t" style="left:83px;top:129.05px;font-size:9.9px;color:#111;transform:scaleX(0.9177);width:29.86px;overflow:hidden;">Maintenance Scheduler</span>
<span class="t" style="left:83px;top:143.39px;font-size:9.9px;color:#111;transform:scaleX(0.9356);width:30.14px;overflow:hidden;">Maps</span>
<span class="t" style="left:83px;top:157.73px;font-size:9.9px;color:#111;transform:scaleX(0.9748);width:28.93px;overflow:hidden;">MDM</span>
<span class="t" style="left:83px;top:172.07px;font-size:9.9px;color:#111;transform:scaleX(0.8455);width:33.35px;overflow:hidden;">Messaging</span>
<span class="t" style="left:83px;top:186.40px;font-size:9.9px;color:#111;transform:scaleX(0.9492);width:29.18px;overflow:hidden;">Microsoft account</span>
<span class="t" style="left:83px;top:200.74px;font-size:9.9px;color:#111;transform:scaleX(0.9492);width:29.18px;overflow:hidden;">Microsoft Edge</span>
<span class="t" style="left:83px;top:215.08px;font-size:9.9px;color:#111;transform:scaleX(0.9492);width:29.18px;overflow:hidden;">Microsoft Secondary Authentication Factor</span>
<span class="t" style="left:83px;top:229.42px;font-size:9.9px;color:#111;transform:scaleX(0.9492);width:29.18px;overflow:hidden;">Microsoft User Experience Virtualization</span>
<span class="t" style="left:83px;top:243.76px;font-size:9.9px;color:#111;transform:scaleX(0.9487);width:29.20px;overflow:hidden;">NetMeeting</span>
<span class="t" style="left:83px;top:258.09px;font-size:9.9px;color:#111;transform:scaleX(0.9143);width:30.84px;overflow:hidden;">OneDrive</span>
<span class="t" style="left:83px;top:272.43px;font-size:9.9px;color:#111;transform:scaleX(0.9528);width:28.76px;overflow:hidden;">Online Assistance</span>
<span class="t" style="left:83px;top:286.77px;font-size:9.9px;color:#111;transform:scaleX(0.8267);width:34.11px;overflow:hidden;">OOBE</span>
<span class="t" style="left:83px;top:301.11px;font-size:9.9px;color:#111;transform:scaleX(0.9138);width:29.33px;overflow:hidden;">Portable Operating System</span>
<span class="t" style="left:83px;top:315.45px;font-size:9.9px;color:#111;transform:scaleX(0.8627);width:31.53px;overflow:hidden;">Presentation Settings</span>
<span class="t" style="left:83px;top:329.78px;font-size:9.9px;color:#111;transform:scaleX(0.8550);width:31.11px;overflow:hidden;">Push To Install</span>
<span class="t" style="left:83px;top:344.12px;font-size:9.9px;color:#111;transform:scaleX(0.9143);width:29.31px;overflow:hidden;">Remote Desktop Services</span>
<span class="t" style="left:83px;top:358.46px;font-size:9.9px;color:#111;transform:scaleX(0.7519);width:34.58px;overflow:hidden;">RSS Feeds</span>
<span class="t" style="left:83px;top:372.80px;font-size:9.9px;color:#111;transform:scaleX(0.8627);width:32.69px;overflow:hidden;">Search</span>
<span class="t" style="left:83px;top:387.14px;font-size:9.9px;color:#111;transform:scaleX(0.9110);width:30.95px;overflow:hidden;height:3.16px;">Security Center</span>
<span class="t" style="left:158px;top:75.30px;font-size:9.9px;color:#10161f;transform:scaleX(0.8627);">Search</span>
<span class="t" style="left:134px;top:95.20px;font-size:9.5px;color:#000;font-weight:bold;transform:scaleX(0.9776);">Allow indexing of encrypted files</span>
<span class="t" style="left:134.1px;top:121.30px;font-size:9.5px;color:#111;transform:scaleX(0.9038);">Edit</span>
<span class="t" style="left:152.3px;top:121.30px;font-size:9.5px;color:#0a64c8;transform:scaleX(0.9902);text-decoration:underline;">policy setting </span>
<span class="t" style="left:134.3px;top:144.90px;font-size:9.5px;color:#111;transform:scaleX(0.9712);">Requirements:</span>
<span class="t" style="left:134.3px;top:156.85px;font-size:9.5px;color:#111;transform:scaleX(0.9979);">Microsoft Windows Vista, or any</span>
<span class="t" style="left:134.3px;top:168.81px;font-size:9.5px;color:#111;transform:scaleX(1.0064);">version of Windows with Windows</span>
<span class="t" style="left:134.3px;top:180.76px;font-size:9.5px;color:#111;transform:scaleX(0.9391);">Search 4.0 or later</span>
<span class="t" style="left:134.3px;top:204.67px;font-size:9.5px;color:#111;transform:scaleX(0.9866);">Description:</span>
<span class="t" style="left:134.3px;top:216.62px;font-size:9.5px;color:#111;transform:scaleX(0.9948);">This policy setting allows</span>
<span class="t" style="left:134.3px;top:228.57px;font-size:9.5px;color:#111;transform:scaleX(0.9883);">encrypted items to be indexed. If</span>
<span class="t" style="left:134.3px;top:240.52px;font-size:9.5px;color:#111;transform:scaleX(1.0007);">you enable this policy setting,</span>
<span class="t" style="left:134.3px;top:252.48px;font-size:9.5px;color:#111;transform:scaleX(1.0238);">indexing  will attempt to decrypt</span>
<span class="t" style="left:134.3px;top:264.43px;font-size:9.5px;color:#111;transform:scaleX(0.9761);">and index the content (access</span>
<span class="t" style="left:134.3px;top:276.38px;font-size:9.5px;color:#111;transform:scaleX(1.0151);">restrictions will still apply). If you</span>
<span class="t" style="left:134.3px;top:288.34px;font-size:9.5px;color:#111;transform:scaleX(0.9969);">disable this policy setting, the</span>
<span class="t" style="left:134.3px;top:300.29px;font-size:9.5px;color:#111;transform:scaleX(0.9789);">search service components</span>
<span class="t" style="left:134.3px;top:312.24px;font-size:9.5px;color:#111;transform:scaleX(1.0480);">(including non-Microsoft</span>
<span class="t" style="left:134.3px;top:324.19px;font-size:9.5px;color:#111;transform:scaleX(1.0021);">components) are expected not to</span>
<span class="t" style="left:134.3px;top:336.15px;font-size:9.5px;color:#111;transform:scaleX(0.9874);">index encrypted items or</span>
<span class="t" style="left:134.3px;top:348.10px;font-size:9.5px;color:#111;transform:scaleX(0.9915);">encrypted stores. This policy</span>
<span class="t" style="left:134.3px;top:360.05px;font-size:9.5px;color:#111;transform:scaleX(1.0149);">setting is not configured by</span>
<span class="t" style="left:134.3px;top:372.01px;font-size:9.5px;color:#111;transform:scaleX(1.0422);">default. If you do not configure</span>
<span class="t" style="left:134.3px;top:383.96px;font-size:9.5px;color:#111;transform:scaleX(1.0131);height:4.04px;overflow:hidden;">this policy setting, the local</span>
<span class="t" style="left:303.2px;top:94.20px;font-size:9.9px;color:#111;transform:scaleX(0.9268);">Setting</span>
<span class="t" style="left:316.3px;top:111.70px;font-size:9.9px;color:#111;transform:scaleX(0.9660);">Add primary intranet search location</span>
<span class="t" style="left:316.3px;top:126.83px;font-size:9.9px;color:#111;transform:scaleX(0.9518);">Add secondary intranet search locations</span>
<span class="t" style="left:316.3px;top:141.96px;font-size:9.9px;color:#111;transform:scaleX(0.9421);">Allow Cloud Search</span>
<span class="t" style="left:316.3px;top:157.09px;font-size:9.9px;color:#111;transform:scaleX(0.9547);">Allow Cortana</span>
<span class="t" style="left:316.3px;top:172.22px;font-size:9.9px;color:#111;transform:scaleX(0.9471);">Allow Cortana above lock screen</span>
<span class="t" style="left:316.3px;top:187.35px;font-size:9.9px;color:#111;transform:scaleX(0.9418);">Allow Cortana Page in OOBE on an AAD account</span>
<span class="t" style="left:316.3px;top:202.48px;font-size:9.9px;color:#fff;transform:scaleX(0.9749);">Allow indexing of encrypted files</span>
<span class="t" style="left:316.3px;top:217.61px;font-size:9.9px;color:#111;transform:scaleX(0.9537);">Allow search and Cortana to use location</span>
<span class="t" style="left:316.3px;top:232.74px;font-size:9.9px;color:#111;transform:scaleX(0.9660);">Allow use of diacritics</span>
<span class="t" style="left:316.3px;top:247.87px;font-size:9.9px;color:#111;transform:scaleX(0.9580);">Always use automatic language detection when indexing co...</span>
<span class="t" style="left:316.3px;top:263.00px;font-size:9.9px;color:#111;transform:scaleX(0.9663);">Prevent automatically adding shared folders to the Window...</span>
<span class="t" style="left:316.3px;top:278.13px;font-size:9.9px;color:#111;transform:scaleX(0.9511);">Indexer data location</span>
<span class="t" style="left:316.3px;top:293.26px;font-size:9.9px;color:#111;transform:scaleX(0.9426);">Default excluded paths</span>
<span class="t" style="left:316.3px;top:308.39px;font-size:9.9px;color:#111;transform:scaleX(0.9442);">Default indexed paths</span>
<span class="t" style="left:316.3px;top:323.52px;font-size:9.9px;color:#111;transform:scaleX(0.9388);">Disable indexer backoff</span>
<span class="t" style="left:316.3px;top:338.65px;font-size:9.9px;color:#111;transform:scaleX(0.9618);">Do not allow locations on removable drives to be added to li...</span>
<span class="t" style="left:316.3px;top:353.78px;font-size:9.9px;color:#111;transform:scaleX(0.9499);">Do not allow web search</span>
<span class="t" style="left:316.3px;top:368.91px;font-size:9.9px;color:#111;transform:scaleX(0.9364);height:7px;overflow:hidden;">Don't search the web or display web results in Search</span>
<span class="t" style="left:138.4px;top:392.40px;font-size:9.9px;color:#111;transform:scaleX(0.8866);">Extended</span>
<span class="t" style="left:189.2px;top:392.40px;font-size:9.9px;color:#111;transform:scaleX(0.9104);">Standard</span>
<span class="t" style="left:3.5px;top:409.60px;font-size:9.9px;color:#111;transform:scaleX(0.9293);">41 setting(s)</span>
</div></body></html>
